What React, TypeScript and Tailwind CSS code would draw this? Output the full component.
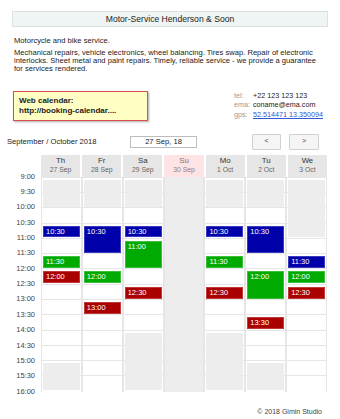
import React from "react";

type Block = { start: number; len: number; kind: "off" | "blue" | "green" | "red"; label?: string };
type Day = { name: string; date: string; holiday?: boolean; blocks: Block[] };

const times = [
  "9:00", "9:30", "10:00", "10:30", "11:00", "11:30", "12:00", "12:30",
  "13:00", "13:30", "14:00", "14:30", "15:00", "15:30", "16:00",
];

const days: Day[] = [
  {
    name: "Th",
    date: "27 Sep",
    blocks: [
      { start: 0, len: 2, kind: "off" },
      { start: 3, len: 1, kind: "blue", label: "10:30" },
      { start: 5, len: 1, kind: "green", label: "11:30" },
      { start: 6, len: 1, kind: "red", label: "12:00" },
      { start: 12, len: 2, kind: "off" },
    ],
  },
  {
    name: "Fr",
    date: "28 Sep",
    blocks: [
      { start: 0, len: 2, kind: "off" },
      { start: 3, len: 2, kind: "blue", label: "10:30" },
      { start: 6, len: 1, kind: "green", label: "12:00" },
      { start: 8, len: 1, kind: "red", label: "13:00" },
    ],
  },
  {
    name: "Sa",
    date: "29 Sep",
    blocks: [
      { start: 0, len: 2, kind: "off" },
      { start: 3, len: 1, kind: "blue", label: "10:30" },
      { start: 4, len: 2, kind: "green", label: "11:00" },
      { start: 7, len: 1, kind: "red", label: "12:30" },
      { start: 10, len: 4, kind: "off" },
    ],
  },
  { name: "Su", date: "30 Sep", holiday: true, blocks: [] },
  {
    name: "Mo",
    date: "1 Oct",
    blocks: [
      { start: 0, len: 2, kind: "off" },
      { start: 3, len: 1, kind: "blue", label: "10:30" },
      { start: 5, len: 1, kind: "green", label: "11:30" },
      { start: 7, len: 1, kind: "red", label: "12:30" },
      { start: 10, len: 4, kind: "off" },
    ],
  },
  {
    name: "Tu",
    date: "2 Oct",
    blocks: [
      { start: 0, len: 2, kind: "off" },
      { start: 3, len: 2, kind: "blue", label: "10:30" },
      { start: 6, len: 2, kind: "green", label: "12:00" },
      { start: 9, len: 1, kind: "red", label: "13:30" },
      { start: 12, len: 2, kind: "off" },
    ],
  },
  {
    name: "We",
    date: "3 Oct",
    blocks: [
      { start: 0, len: 4, kind: "off" },
      { start: 5, len: 1, kind: "blue", label: "11:30" },
      { start: 6, len: 1, kind: "green", label: "12:00" },
      { start: 7, len: 1, kind: "red", label: "12:30" },
    ],
  },
];

const kindClass: Record<Block["kind"], string> = {
  off: "bg-[#ededed]",
  blue: "bg-[#0000aa] border border-[#3a3ac0] text-white",
  green: "bg-[#00aa00] border border-[#3ac03a] text-white",
  red: "bg-[#aa0000] border border-[#c03a3a] text-white",
};

function DayColumn({ day }: { day: Day }) {
  if (day.holiday) {
    return <div className="h-[215px] border-x border-[#e6e6e6] bg-[#ededed]" />;
  }
  return (
    <div className="grid h-[215px] grid-rows-[repeat(14,minmax(0,1fr))] border-x border-t border-[#e6e6e6]">
      {Array.from({ length: 14 }).map((_, i) => (
        <div
          key={i}
          className={i < 13 ? "border-b border-[#e6e6e6]" : ""}
          style={{ gridRow: `${i + 1}`, gridColumn: "1" }}
        />
      ))}
      {day.blocks.map((b) => (
        <div
          key={b.start}
          className={`mx-[1px] mt-[2px] mb-[1.5px] pl-[2px] text-[7.5px] leading-[10px] ${kindClass[b.kind]}`}
          style={{ gridRow: `${b.start + 1} / span ${b.len}`, gridColumn: "1" }}
        >
          {b.label}
        </div>
      ))}
    </div>
  );
}

export default function App() {
  return (
    <div className="h-[419px] w-[340px] overflow-hidden bg-white font-['Liberation_Sans',Arial,sans-serif] text-[#222]">
      <div className="px-[12px] pt-[11px]">
        <div className="flex h-[16px] items-center justify-center border border-[#dbe3e2] bg-[#eef5f4] text-[8.6px]">
          Motor-Service Henderson &amp; Soon
        </div>
      </div>

      <div className="w-[326px] pl-[14px] text-[7.6px]">
        <p className="mt-[9px] leading-[9px]">Motorcycle and bike service.</p>
        <p className="mt-[3.5px] leading-[8.4px]">
          Mechanical repairs, vehicle electronics, wheel balancing. Tires swap. Repair of electronic
          interlocks. Sheet metal and paint repairs. Timely, reliable service - we provide a guarantee
          for services rendered.
        </p>
      </div>

      <div className="mt-[17px] flex items-start pl-[13px]">
        <div className="h-[30px] w-[135px] border border-[#dd4b4b] bg-[#ffffc4] pl-[5px] pt-[4px] text-[8px] font-bold leading-[10px] shadow-[1px_1px_2px_rgba(0,0,0,0.35)]">
          <div>Web calendar:</div>
          <div>http://booking-calendar....</div>
        </div>
        <div className="ml-[86px] grid grid-cols-[19px_auto] text-[7.2px] leading-[9.5px]">
          <span className="text-[#999]">tel:</span>
          <span>+22 123 123 123</span>
          <span className="text-[#999]">ema:</span>
          <span>coname@ema.com</span>
          <span className="text-[#999]">gps:</span>
          <span className="text-[#3355cc] underline">52.514471 13.350094</span>
        </div>
      </div>

      <div className="mt-[13px] flex h-[16px] items-center text-[7.6px]">
        <span className="w-[130px] pl-[7px]">September / October 2018</span>
        <div className="flex h-[12px] w-[67px] items-center justify-center border border-[#bdbdbd]">
          27 Sep, 18
        </div>
        <button className="ml-[55px] flex h-[16px] w-[29px] items-center justify-center rounded-[1px] border border-[#d0d0d0] bg-[#f5f5f5] text-[7px] text-[#444]">
          &lt;
        </button>
        <button className="ml-[8px] flex h-[16px] w-[30px] items-center justify-center rounded-[1px] border border-[#d0d0d0] bg-[#f5f5f5] text-[7px] text-[#444]">
          &gt;
        </button>
      </div>

      <div className="mt-[5px] grid w-[327px] grid-cols-[39px_repeat(7,minmax(0,1fr))] gap-x-[2px]">
        <div />
        {days.map((d) => (
          <div
            key={d.name}
            className={`flex h-[22px] flex-col items-center justify-center ${d.holiday ? "bg-[#fde3e3] text-[#8a6f6f]" : "bg-[#e6e6e6] text-[#333]"}`}
          >
            <span className="text-[7.8px] leading-[8.5px]">{d.name}</span>
            <span className={`text-[6.8px] leading-[8.5px] ${d.holiday ? "text-[#9a7d7d]" : "text-[#666]"}`}>{d.date}</span>
          </div>
        ))}
      </div>

      <div className="grid w-[327px] grid-cols-[41px_repeat(7,minmax(0,1fr))]">
        <div className="-mt-[5px] flex h-[225px] flex-col justify-between pr-[6px] text-right text-[7.5px] leading-[10px] text-[#444]">
          {times.map((t) => (
            <span key={t}>{t}</span>
          ))}
        </div>
        {days.map((d) => (
          <DayColumn key={d.name} day={d} />
        ))}
      </div>

      <div className="mt-[10px] pr-[18px] text-right text-[7px] text-[#444]">© 2018 Gimin Studio</div>
    </div>
  );
}
